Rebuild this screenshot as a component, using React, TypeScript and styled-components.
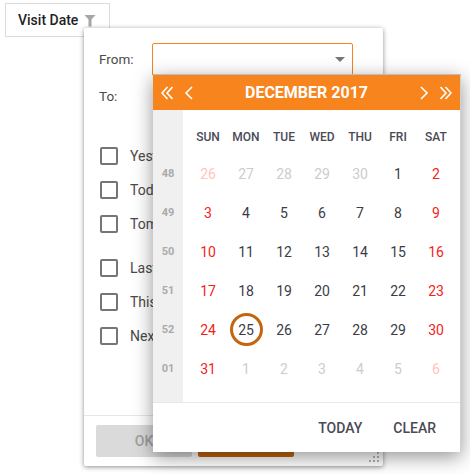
import React from "react";
import styled, { createGlobalStyle } from "styled-components";

const Global = createGlobalStyle`
  html, body { margin: 0; padding: 0; background: #fff; overflow: hidden; }
  body { font-family: Roboto, "Liberation Sans", sans-serif; }
`;
const Page = styled.div`
  position: relative;
  width: 470px;
  height: 474px;
  overflow: hidden;
  padding: 3px 0 0 5px;
  box-sizing: border-box;
`;
const HeaderCell = styled.div`
  width: 105px;
  height: 34px;
  box-sizing: border-box;
  border: 1px solid #dcdcdc;
  display: flex;
  align-items: center;
  padding: 0 0 0 12px;
  gap: 6px;
  font-size: 14px;
  font-weight: 500;
  color: #1f1f1f;
`;
const Panel = styled.div`
  position: absolute;
  left: 84px;
  top: 28px;
  width: 299px;
  height: 438px;
  box-sizing: border-box;
  background: #fff;
  border-radius: 2px;
  padding-top: 7px;
  box-shadow: 0 1px 5px rgba(0, 0, 0, 0.45);
  display: flex;
  flex-direction: column;
`;
const Field = styled.div<{ $h: number }>`
  display: flex;
  align-items: center;
  height: ${(p) => p.$h}px;
  padding-left: 15px;
  font-size: 13.5px;
  color: #4a4a4a;
`;
const FieldLabel = styled.span`
  width: 53px;
`;
const Input = styled.div`
  width: 201px;
  height: 33px;
  box-sizing: border-box;
  border: 1px solid #f7841c;
  border-radius: 2px;
  display: flex;
  align-items: center;
  justify-content: flex-end;
  padding-right: 7px;
`;
const Arrow = styled.div`
  width: 0;
  height: 0;
  border-left: 5px solid transparent;
  border-right: 5px solid transparent;
  border-top: 5px solid #777;
`;
const Options = styled.div`
  display: flex;
  flex-direction: column;
  gap: 10px;
  padding: 30px 0 0 16px;
  flex: 1;
`;
const Group = styled.div`
  display: flex;
  flex-direction: column;
`;
const Option = styled.div`
  height: 34px;
  display: flex;
  align-items: center;
  gap: 12px;
  font-size: 14px;
  color: #4a4a4a;
`;
const OptionLabel = styled.span`
  width: 23px;
  overflow: hidden;
  white-space: nowrap;
`;
const Box = styled.div`
  width: 18px;
  height: 18px;
  box-sizing: border-box;
  border: 2px solid #757575;
  border-radius: 2px;
`;
const PanelFooter = styled.div`
  height: 51px;
  box-sizing: border-box;
  border-top: 1px solid #e6e6e6;
  padding: 9px 0 0 12px;
  display: flex;
  gap: 6px;
`;
const Btn = styled.div<{ $primary?: boolean }>`
  width: 96px;
  height: 32px;
  border-radius: 2px;
  background: ${(p) => (p.$primary ? "#c0650f" : "#dadada")};
  color: ${(p) => (p.$primary ? "#fff" : "#9e9e9e")};
  font-size: 14px;
  font-weight: 500;
  display: flex;
  align-items: center;
  justify-content: center;
`;
const Grip = styled.svg`
  position: absolute;
  right: 2px;
  bottom: 2px;
`;
const Calendar = styled.div`
  position: absolute;
  left: 153px;
  top: 74px;
  width: 308px;
  height: 378px;
  box-sizing: border-box;
  background: #fff;
  border-top: 1px solid #bdbdbd;
  border-right: 1px solid #d0d0d0;
  box-shadow: 0 5px 18px rgba(0, 0, 0, 0.42);
  display: flex;
  flex-direction: column;
`;
const CalHeader = styled.div`
  height: 35px;
  background: #f7841c;
  color: #fff;
  display: flex;
  align-items: center;
  padding: 0 8px;
`;
const NavIcon = styled.svg<{ $flip?: boolean }>`
  display: block;
  flex: none;
  transform: ${(p) => (p.$flip ? "scaleX(-1)" : "none")};
`;
const Title = styled.div`
  flex: 1;
  text-align: center;
  font-size: 16px;
  font-weight: 700;
`;
const CalBody = styled.div`
  flex: 1;
  display: grid;
  grid-template-columns: 36px repeat(7, 38px);
  grid-template-rows: 44px repeat(6, 39px);
  align-content: start;
  align-items: center;
  justify-items: center;
  background: linear-gradient(to right, #f0f0f0 30px, #fff 30px);
`;
const WeekDay = styled.div`
  font-size: 12px;
  font-weight: 500;
  color: #4a4a55;
  margin-top: 10px;
`;
const WeekNo = styled.div`
  justify-self: start;
  width: 30px;
  text-align: center;
  font-size: 11px;
  font-weight: 700;
  color: #aaaaaa;
`;
const Day = styled.div<{ $c: string; $today?: boolean }>`
  width: 33px;
  height: 33px;
  box-sizing: border-box;
  border-radius: 50%;
  display: flex;
  align-items: center;
  justify-content: center;
  font-size: 14px;
  color: ${(p) => p.$c};
  border: ${(p) => (p.$today ? "3px solid #c4660f" : "none")};
`;
const CalFooter = styled.div`
  height: 50px;
  box-sizing: border-box;
  border-top: 1px solid #e8e8e8;
  display: flex;
  align-items: center;
  justify-content: flex-end;
  gap: 31px;
  padding: 0 24px 0 0;
  font-size: 14px;
  font-weight: 500;
  color: #4a4a55;
`;
const Spacer = styled.div<{ $w: number }>`
  width: ${(p) => p.$w}px;
  flex: none;
`;

const Single = ({ flip }: { flip?: boolean }) => (
  <NavIcon $flip={flip} width="10" height="14" viewBox="0 0 10 14" fill="none" stroke="#fff" strokeWidth="1.6">
    <path d="M8 1 L2 7 L8 13" />
  </NavIcon>
);
const Double = ({ flip }: { flip?: boolean }) => (
  <NavIcon $flip={flip} width="12" height="14" viewBox="0 0 12 14" fill="none" stroke="#fff" strokeWidth="1.6">
    <path d="M6.5 1 L1 7 L6.5 13 M11.5 1 L6 7 L11.5 13" />
  </NavIcon>
);

const RED = "#f5221b";
const DARK = "#3c3c46";
const GREY = "#cccccc";
const PINK = "#ffc4be";
const weeks = [
  { n: "48", d: [26, 27, 28, 29, 30, 1, 2] },
  { n: "49", d: [3, 4, 5, 6, 7, 8, 9] },
  { n: "50", d: [10, 11, 12, 13, 14, 15, 16] },
  { n: "51", d: [17, 18, 19, 20, 21, 22, 23] },
  { n: "52", d: [24, 25, 26, 27, 28, 29, 30] },
  { n: "01", d: [31, 1, 2, 3, 4, 5, 6] },
];
const colorOf = (w: number, i: number) => {
  const outside = (w === 0 && i < 5) || (w === 5 && i > 0);
  const weekend = i === 0 || i === 6;
  if (outside) return weekend ? PINK : GREY;
  return weekend ? RED : DARK;
};

export default function App() {
  return (
    <Page>
      <Global />
      <HeaderCell>
        Visit Date
        <svg width="12" height="13" viewBox="0 0 12 13">
          <path d="M0.5 1 H11.5 L7.5 5.5 V12.5 H4.5 V5.5 Z" fill="#a6a6a6" />
        </svg>
      </HeaderCell>
      <Panel>
        <Field $h={48}>
          <FieldLabel>From:</FieldLabel>
          <Input>
            <Arrow />
          </Input>
        </Field>
        <Field $h={26}>
          <FieldLabel>To:</FieldLabel>
        </Field>
        <Options>
          <Group>
            <Option><Box /><OptionLabel>Yesterday</OptionLabel></Option>
            <Option><Box /><OptionLabel>Today</OptionLabel></Option>
            <Option><Box /><OptionLabel>Tomorrow</OptionLabel></Option>
          </Group>
          <Group>
            <Option><Box /><OptionLabel>Last Week</OptionLabel></Option>
            <Option><Box /><OptionLabel>This Week</OptionLabel></Option>
            <Option><Box /><OptionLabel>Next Week</OptionLabel></Option>
          </Group>
        </Options>
        <PanelFooter>
          <Btn>OK</Btn>
          <Btn $primary>CANCEL</Btn>
        </PanelFooter>
        <Grip width="12" height="12" viewBox="0 0 12 12" fill="#b5b5b5">
          <rect x="8" y="0" width="2" height="2" />
          <rect x="4" y="4" width="2" height="2" />
          <rect x="8" y="4" width="2" height="2" />
          <rect x="0" y="8" width="2" height="2" />
          <rect x="4" y="8" width="2" height="2" />
          <rect x="8" y="8" width="2" height="2" />
        </Grip>
      </Panel>
      <Calendar>
        <CalHeader>
          <Double />
          <Spacer $w={11} />
          <Single />
          <Title>DECEMBER 2017</Title>
          <Single flip />
          <Spacer $w={11} />
          <Double flip />
        </CalHeader>
        <CalBody>
          <span />
          {["SUN", "MON", "TUE", "WED", "THU", "FRI", "SAT"].map((d) => (
            <WeekDay key={d}>{d}</WeekDay>
          ))}
          {weeks.map((w, wi) => (
            <React.Fragment key={w.n}>
              <WeekNo>{w.n}</WeekNo>
              {w.d.map((d, i) => (
                <Day key={i} $c={colorOf(wi, i)} $today={wi === 4 && i === 1}>
                  {d}
                </Day>
              ))}
            </React.Fragment>
          ))}
        </CalBody>
        <CalFooter>
          <span>TODAY</span>
          <span>CLEAR</span>
        </CalFooter>
      </Calendar>
    </Page>
  );
}
